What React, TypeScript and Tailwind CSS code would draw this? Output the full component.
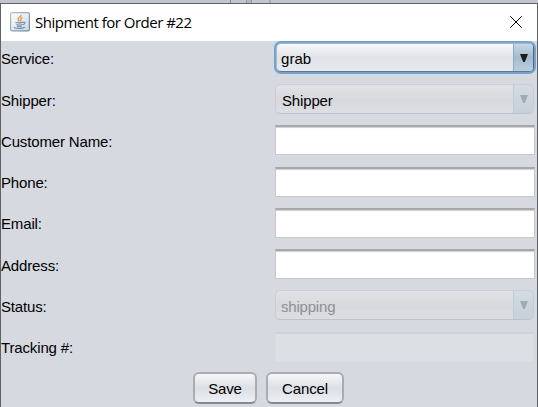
import type { ReactNode } from "react";

function Arrow({ color }: { color: string }) {
  return (
    <svg width="8" height="8" viewBox="0 0 8 8" className="block">
      <path d="M0 0H8L4.8 8H3.2Z" fill={color} />
    </svg>
  );
}

function ActiveCombo({ value }: { value: string }) {
  return (
    <div className="h-[33px] w-[262px] rounded-[7px] bg-[#73a4d1] p-[2px]">
      <div className="h-full rounded-[5px] border border-[#aeb9c6] border-r-[#4c6a88] border-b-[#6a7685]">
        <div className="flex h-full overflow-hidden rounded-[4px] bg-linear-to-b from-[#f7f8fa] via-[#dfe2e6] via-50% to-[#e6e9ee]">
          <span className="flex-1 pl-[4px] text-[15px] leading-[29px] tracking-[0.05px]">{value}</span>
          <span className="flex w-[20px] items-center justify-center border-l border-[#8fa9c0] bg-linear-to-b from-[#c5d7e6] via-[#a5bbcd] via-50% to-[#b8cfe2]">
            <Arrow color="#1c1c1c" />
          </span>
        </div>
      </div>
    </div>
  );
}

function MutedCombo({ value, className }: { value: string; className: string }) {
  return (
    <div className="h-[33px] w-[262px] px-[1px] pt-[1px]">
      <div className="flex h-[30px] w-[259px] overflow-hidden rounded-[5px] border border-[#c9cdd5] border-b-[#bcc2cb] bg-linear-to-b from-[#e1e2e6] via-[#d7d9dd] via-55% to-[#dbdee2]">
        <span className={`flex-1 text-[15px] leading-[31px] ${className}`}>{value}</span>
        <span className="-my-px -mr-px flex w-[21px] items-center justify-center rounded-r-[5px] border border-[#b4c0cd] border-l-[#c1ccd6] bg-linear-to-b from-[#d3dbe4] to-[#c6d0db]">
          <Arrow color="#a4a9b1" />
        </span>
      </div>
    </div>
  );
}

function TextField({ offset = "pt-[1px]" }: { offset?: string }) {
  return (
    <div className={`h-[33px] w-[262px] px-[1px] ${offset}`}>
      <div className="h-[30px] w-[260px] border border-t-2 border-[#c6c8ca] border-t-[#a6a8ab] bg-white shadow-[inset_0_2px_1px_-1px_#cfcfcf]" />
    </div>
  );
}

function DisabledField() {
  return (
    <div className="h-[33px] w-[262px] px-[1px] pt-[2px]">
      <div className="h-[30px] w-[259px] border border-t-2 border-[#d8dbe0] border-t-[#cfd2d8] bg-[#dce0e4]" />
    </div>
  );
}

function Row({ label, className, children }: { label: string; className: string; children: ReactNode }) {
  return (
    <div className={`flex h-[33px] ${className}`}>
      <span className="w-[273px] text-[15px] leading-[36px] tracking-[-0.15px]">{label}</span>
      {children}
    </div>
  );
}

function Button({ label, className }: { label: string; className: string }) {
  return (
    <button
      className={`h-[32px] rounded-[6px] border-2 border-[#a9acb1] border-b-[#85888c] bg-linear-to-b from-[#f6f7f9] via-[#dcdfe4] via-50% to-[#eceff4] pt-[2px] text-[15px] leading-[26px] tracking-[-0.15px] ${className}`}
    >
      {label}
    </button>
  );
}

function JavaIcon() {
  return (
    <svg width="20" height="20" viewBox="0 0 20 20" className="block">
      <defs>
        <linearGradient id="tile" x1="0" y1="0" x2="1" y2="1">
          <stop offset="0" stopColor="#ffffff" />
          <stop offset="1" stopColor="#cbd7e1" />
        </linearGradient>
        <linearGradient id="edge" x1="0" y1="0" x2="1" y2="1">
          <stop offset="0" stopColor="#b9c3ca" />
          <stop offset="1" stopColor="#6288a6" />
        </linearGradient>
      </defs>
      <rect x="0.6" y="0.6" width="18.8" height="18.3" rx="1.5" fill="url(#tile)" stroke="url(#edge)" strokeWidth="1.2" />
      <path d="M11 2.8C11.5 5 7.3 5.5 8.2 7.6C8.5 8.4 9.2 9 9.4 9.5M12.4 5.5C9.6 6.5 11.7 7.9 10.4 9.4" fill="none" stroke="#e99a5c" strokeWidth="1.5" />
      <path d="M5.5 10.4C7 11 11.5 11 13 10.3M6.4 12.4C8 13.1 10.8 13.1 12.4 12.4M7 14.2C8.5 14.8 10.5 14.8 11.7 14.2M13 10.4C15.7 9.6 15.5 12 12.8 12.8M4.4 15.2C3 16.4 11.5 17.4 15 15.3" fill="none" stroke="#688ca9" strokeWidth="1.1" />
    </svg>
  );
}

export default function App() {
  return (
    <div className="flex h-[407px] w-[538px] flex-col overflow-hidden bg-[#d6d9e0] font-['Liberation_Sans',Arial,sans-serif] text-black">
      <div className="flex h-[3px] bg-[#c2c4ce] pl-[230px]">
        <div className="w-[16px] border-l border-[#85878f]" />
        <div className="w-[6px] border-x border-[#9b9da6] bg-[#b2b4be]" />
        <div className="w-[19px] border-r-2 border-[#a9abb4]" />
      </div>
      <div className="flex flex-1 flex-col border-x border-t border-[#606266]">
        <header className="flex h-[37px] items-center bg-white pb-[1px] pl-[9px] pr-[15px]">
          <JavaIcon />
          <h1 className="ml-[5px] flex-1 whitespace-nowrap font-['Open_Sans','Noto_Sans',sans-serif] text-[15px] leading-[20px] tracking-[-0.5px]">
            Shipment for Order #22
          </h1>
          <svg width="12" height="12" viewBox="0 0 12 12" className="block">
            <path d="M0.3 0.3L11.7 11.7M11.7 0.3L0.3 11.7" stroke="#000" strokeWidth="1" />
          </svg>
        </header>
        <main>
          <Row label="Service:" className="">
            <ActiveCombo value="grab" />
          </Row>
          <Row label="Shipper:" className="mt-[9px]">
            <MutedCombo value="Shipper" className="pl-[6px] tracking-[-0.15px]" />
          </Row>
          <Row label="Customer Name:" className="mt-[8px]">
            <TextField />
          </Row>
          <Row label="Phone:" className="mt-[8px]">
            <TextField offset="pt-[2px]" />
          </Row>
          <Row label="Email:" className="mt-[8px]">
            <TextField offset="pt-[2px]" />
          </Row>
          <Row label="Address:" className="mt-[9px]">
            <TextField />
          </Row>
          <Row label="Status:" className="mt-[8px]">
            <MutedCombo value="shipping" className="pl-[5px] tracking-[-0.2px] text-[#8e8f94]" />
          </Row>
          <Row label="Tracking #:" className="mt-[8px]">
            <DisabledField />
          </Row>
          <div className="mt-[9px] flex gap-[9px] pl-[192px]">
            <Button label="Save" className="w-[64px]" />
            <Button label="Cancel" className="w-[78px]" />
          </div>
        </main>
      </div>
    </div>
  );
}
